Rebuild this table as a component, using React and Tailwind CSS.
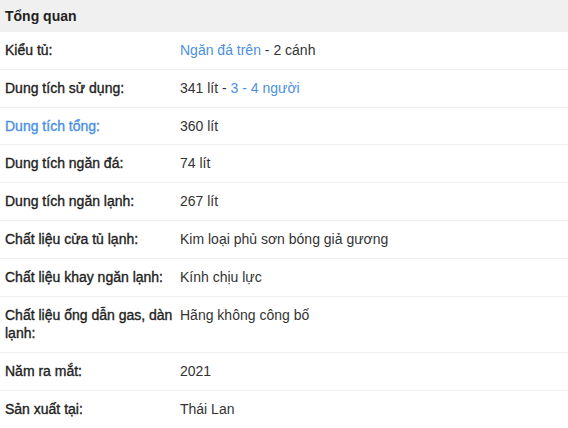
import React from "react";

const rows = [
  { label: "Kiểu tủ:", value: <><span className="text-[#4a90e2]">Ngăn đá trên</span> - 2 cánh</> },
  { label: "Dung tích sử dụng:", value: <>341 lít - <span className="text-[#4a90e2]">3 - 4 người</span></> },
  { label: "Dung tích tổng:", value: "360 lít", blue: true },
  { label: "Dung tích ngăn đá:", value: "74 lít" },
  { label: "Dung tích ngăn lạnh:", value: "267 lít" },
  { label: "Chất liệu cửa tủ lạnh:", value: "Kim loại phủ sơn bóng giả gương" },
  { label: "Chất liệu khay ngăn lạnh:", value: "Kính chịu lực" },
  { label: "Chất liệu ống dẫn gas, dàn lạnh:", value: "Hãng không công bố" },
  { label: "Năm ra mắt:", value: "2021" },
  { label: "Sản xuất tại:", value: "Thái Lan" },
];

export default function App() {
  return (
    <div className="w-[568px] h-[428px] overflow-hidden bg-white text-[14px] leading-[18.8px] text-[#333]" style={{ fontFamily: '"Liberation Sans", Arial, sans-serif' }}>
      <div className="h-8 bg-[#f0f0f0] px-[5px] flex items-center font-bold text-[#222]">Tổng quan</div>
      {rows.map((r, i) => (
        <div key={i} className={`grid grid-cols-[180px_1fr] py-[9px] ${i < rows.length - 1 ? "border-b border-[#eeeeee]" : ""}`}>
          <div className={`pl-[5px] pr-[2px] [-webkit-text-stroke:0.35px] ${r.blue ? "text-[#4a90e2]" : "text-[#222]"}`}>{r.label}</div>
          <div className="pr-2">{r.value}</div>
        </div>
      ))}
    </div>
  );
}
